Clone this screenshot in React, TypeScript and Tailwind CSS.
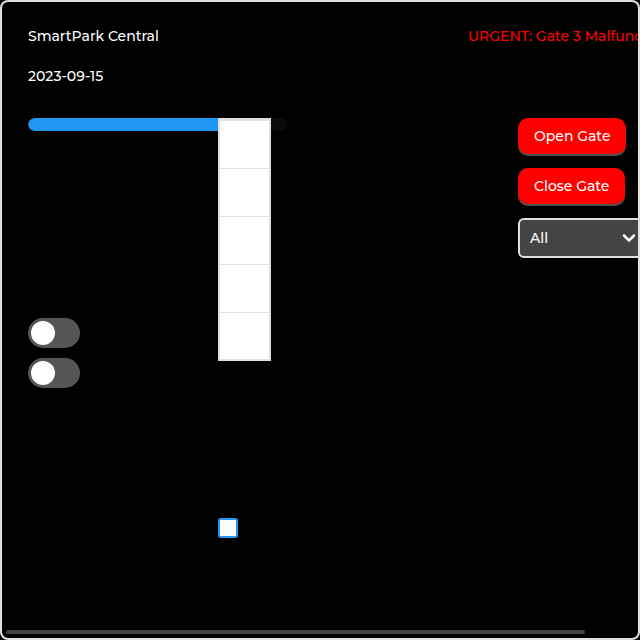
import { ChevronDown } from 'lucide-react';

const spaces = ['Space 1', 'Space 2', 'Space 3', 'Space 4', 'Space 5'];

function Toggle({ label }: { label: string }) {
  return (
    <input
      type="checkbox"
      role="switch"
      aria-label={label}
      className="flex h-[30px] w-[52px] appearance-none items-center rounded-full bg-[#555555] px-[3px] before:size-6 before:rounded-full before:bg-white checked:justify-end checked:bg-[#2196f3]"
    />
  );
}

function GateButton({ children }: { children: string }) {
  return (
    <button
      type="button"
      className="h-9 rounded-[10px] bg-[#ff0000] px-4 text-white shadow-[0_2px_0_#505050]"
    >
      {children}
    </button>
  );
}

export default function App() {
  return (
    <div className="h-screen bg-black">
      <main className="relative h-full overflow-hidden rounded-lg border-2 border-[#e0e0e0] bg-black px-[26px] pt-6 font-['Montserrat','Inter',sans-serif] text-sm leading-5 font-medium whitespace-nowrap text-white">
        <header className="grid grid-cols-[440px_max-content] gap-y-5">
          <h1>SmartPark Central</h1>
          <p role="alert" className="text-[#ff0000]">URGENT: Gate 3 Malfunction</p>
          <time dateTime="2023-09-15">2023-09-15</time>
        </header>

        <div className="mt-8 grid grid-cols-[180px_290px_max-content] grid-rows-[190px_190px_auto] gap-[10px]">
          <div
            role="progressbar"
            aria-label="Occupancy"
            aria-valuenow={75}
            className="h-[13px] w-[260px] overflow-hidden rounded-full bg-[#0a0a0a]"
          >
            <div className="h-full w-3/4 rounded-full bg-[#2196f3]" />
          </div>

          <div className="relative col-start-2 row-start-1">
            <table aria-label="Parking spaces" className="w-[53px] border-separate border-spacing-0 border-2 border-t-3 border-[#e0e0e0] bg-white">
              <tbody>
                {spaces.map((space) => (
                  <tr key={space} className="group">
                    <td aria-label={space} className="h-12 border-b border-[#e0e0e0] p-0 group-last:h-[46px] group-last:border-b-0" />
                  </tr>
                ))}
              </tbody>
            </table>
          </div>

          <div className="col-start-3 row-start-1 flex flex-col items-start gap-[14px]">
            <GateButton>Open Gate</GateButton>
            <GateButton>Close Gate</GateButton>
            <div className="relative">
              <select
                aria-label="Gate filter"
                className="h-10 w-[130px] appearance-none rounded-md border-2 border-[#e0e0e0] bg-[#444444] px-[10px] text-white"
              >
                <option>All</option>
              </select>
              <ChevronDown aria-hidden="true" className="pointer-events-none absolute top-[10px] right-[9px] size-5" strokeWidth={3} />
            </div>
          </div>

          <div className="col-start-1 row-start-2 flex flex-col gap-[10px]">
            <Toggle label="Entry lights" />
            <Toggle label="Exit lights" />
          </div>

          <input
            type="checkbox"
            aria-label="Automatic mode"
            className="col-start-2 row-start-3 size-5 appearance-none rounded-[3px] border-2 border-[#2196f3] bg-white checked:bg-[#2196f3]"
          />
        </div>

        <div aria-hidden="true" className="absolute bottom-1 left-1 h-1 w-[91%] rounded-full bg-[#404040]" />
      </main>
    </div>
  );
}
